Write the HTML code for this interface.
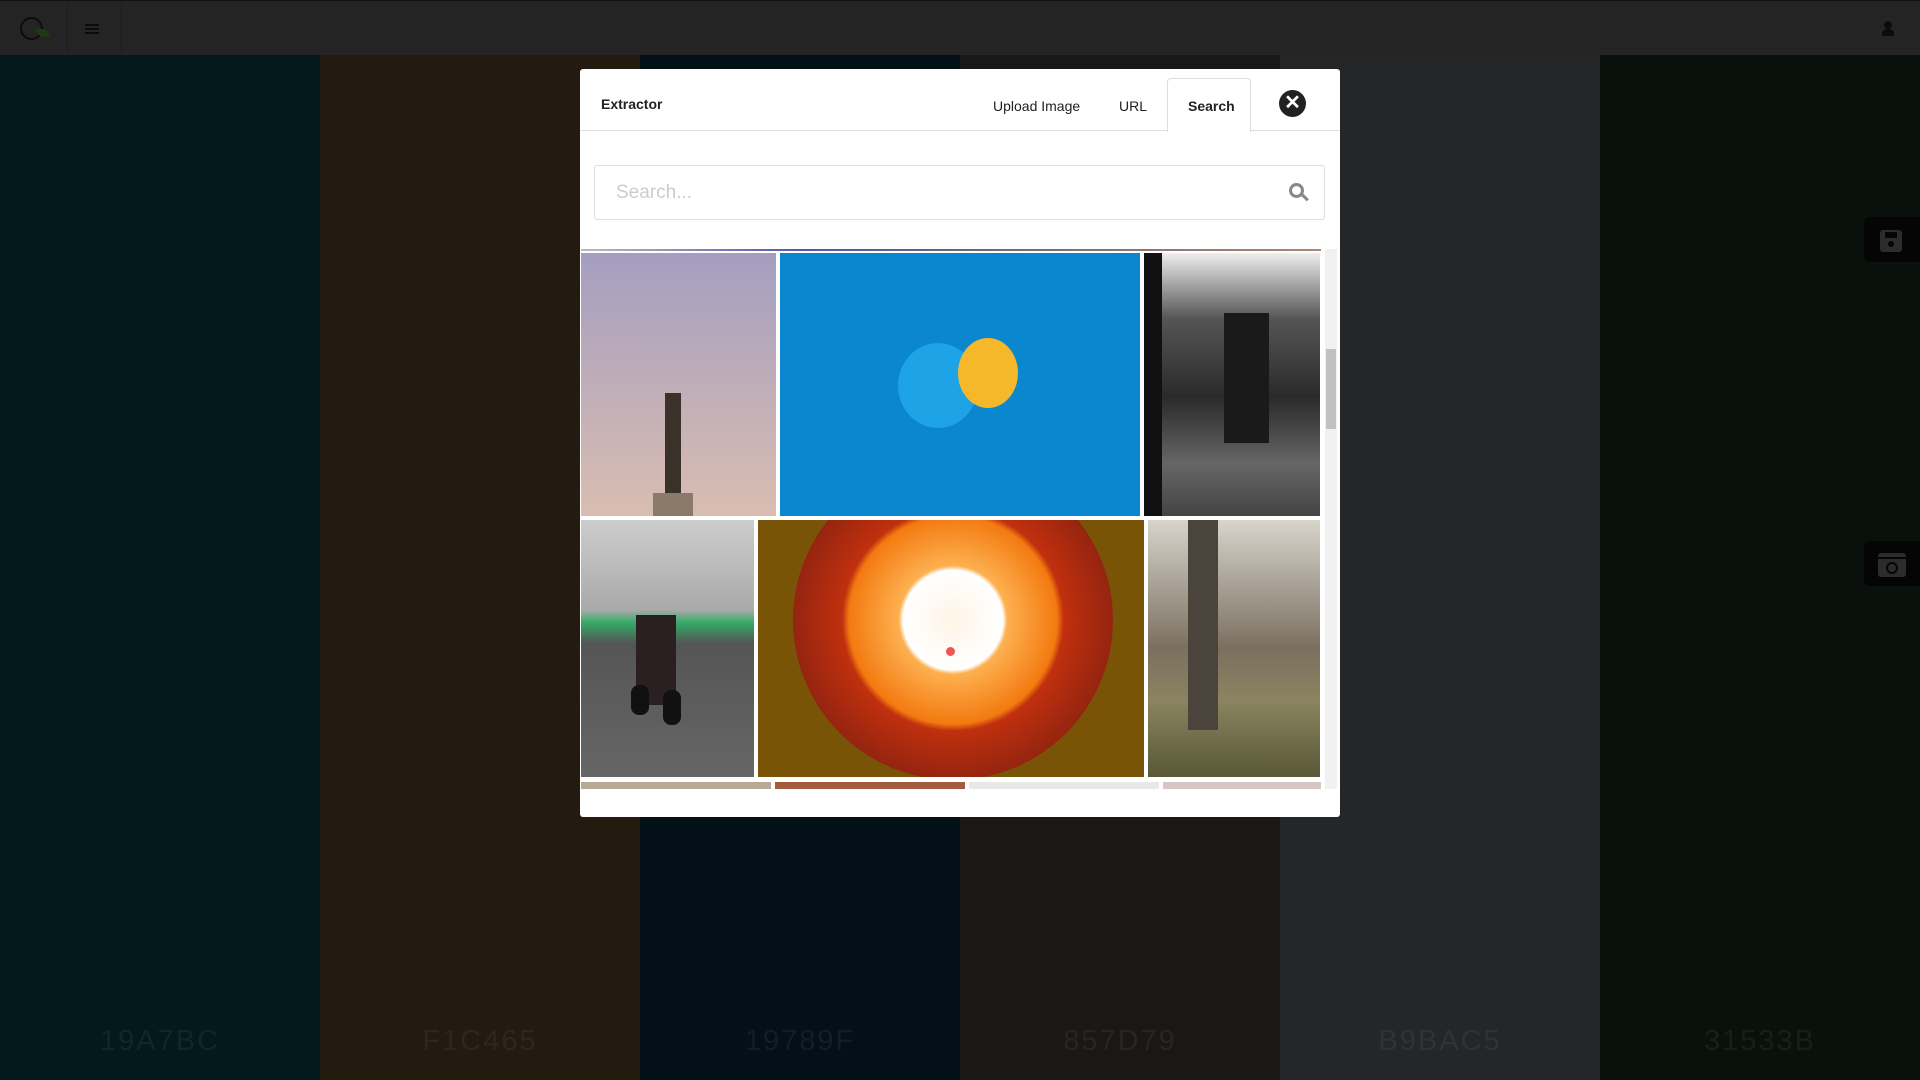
<!DOCTYPE html>
<html><head><meta charset="utf-8"><style>
*{margin:0;padding:0;box-sizing:border-box}
body{width:1920px;height:1080px;overflow:hidden;background:#111;font-family:"Liberation Sans",sans-serif;position:relative}
.col{position:absolute;top:55px;height:1025px;width:320px}
.col span{position:absolute;bottom:22px;width:100%;text-align:center;font-size:29px;letter-spacing:2px;color:rgba(255,255,255,0.06)}
.nav{position:absolute;left:0;top:0;width:1920px;height:55px;background:#242424;border-top:1px solid #111}
.modal{position:absolute;left:580px;top:69px;width:760px;height:748px;background:#fff;border-radius:3px;overflow:hidden}
.hdr{position:absolute;left:0;top:0;width:760px;height:62px;border-bottom:1px solid #ddd}
.t{position:absolute;font-size:14px;color:#222}
.img{position:absolute;overflow:hidden}
.fb{position:absolute;left:1864px;width:56px;height:45px;background:#050505;border-radius:6px 0 0 6px}
</style></head><body>
<div class="col" style="left:0;background:#03191c"><span>19A7BC</span></div>
<div class="col" style="left:320px;background:#231a10"><span>F1C465</span></div>
<div class="col" style="left:640px;background:#031018"><span>19789F</span></div>
<div class="col" style="left:960px;background:#1a1817"><span>857D79</span></div>
<div class="col" style="left:1280px;background:#252627"><span>B9BAC5</span></div>
<div class="col" style="left:1600px;background:#0a110d"><span>31533B</span></div>
<div class="nav">
 <div style="position:absolute;left:67px;top:0;width:1px;height:54px;background:#1c1c1c"></div>
 <div style="position:absolute;left:121px;top:0;width:1px;height:54px;background:#1c1c1c"></div>
 <div style="position:absolute;left:20px;top:16px;width:23px;height:23px;border:2px solid #0c0c0c;border-radius:50%"></div>
 <div style="position:absolute;left:36px;top:28px;width:14px;height:8px;background:#1e3a10;border-radius:0 8px 0 8px"></div>
 <div style="position:absolute;left:85px;top:23px;width:14px;height:2px;background:#0c0c0c;box-shadow:0 4px 0 #0c0c0c,0 8px 0 #0c0c0c"></div>
 <div style="position:absolute;left:1884px;top:20px;width:8px;height:8px;border-radius:50%;background:#0c0c0c"></div>
 <div style="position:absolute;left:1882px;top:28px;width:12px;height:7px;border-radius:5px 5px 0 0;background:#0c0c0c"></div>
</div>
<div class="fb" style="top:217px"><div style="position:absolute;left:16px;top:13px;width:22px;height:22px;background:#2c2c2c;border-radius:3px"></div><div style="position:absolute;left:21px;top:15px;width:12px;height:6px;background:#050505"></div><div style="position:absolute;left:24px;top:24px;width:6px;height:6px;background:#050505;border-radius:50%"></div></div>
<div class="fb" style="top:541px"><div style="position:absolute;left:14px;top:12px;width:28px;height:24px;background:#2c2c2c;border-radius:3px"></div><div style="position:absolute;left:14px;top:16px;width:28px;height:2px;background:#050505"></div><div style="position:absolute;left:22px;top:21px;width:12px;height:12px;border:2px solid #050505;border-radius:50%"></div></div>

<div class="modal">
 <div class="hdr">
  <div class="t" style="left:21px;top:27px;font-weight:bold;font-size:14px">Extractor</div>
  <div class="t" style="left:413px;top:29px">Upload Image</div>
  <div class="t" style="left:539px;top:29px">URL</div>
  <div style="position:absolute;left:587px;top:9px;width:84px;height:54px;background:#fff;border:1px solid #ddd;border-bottom:none;border-radius:4px 4px 0 0"></div>
  <div class="t" style="left:608px;top:29px;font-weight:bold">Search</div>
  <div style="position:absolute;left:699px;top:21px;width:27px;height:27px;border-radius:50%;background:#222;color:#fff;font-size:20px;font-weight:bold;text-align:center;line-height:27px">✕</div>
 </div>
 <div style="position:absolute;left:14px;top:96px;width:731px;height:55px;border:1px solid #ddd;border-radius:3px">
  <div style="position:absolute;left:21px;top:16px;font-size:19px;color:#ccc">Search...</div>
  <div style="position:absolute;left:694px;top:17px;width:15px;height:15px;border:3px solid #888;border-radius:50%"></div>
  <div style="position:absolute;left:706px;top:30px;width:8px;height:3px;background:#888;transform:rotate(45deg)"></div>
 </div>
 <div style="position:absolute;left:0;top:180px;width:760px;height:540px;overflow:hidden">
  <div class="img" style="left:1px;top:0;width:740px;height:2px;background:linear-gradient(90deg,#bbb,#55a 30%,#667 50%,#a87)"></div>
  <div class="img" style="left:1px;top:4px;width:195px;height:263px;background:linear-gradient(#a59ec0,#d9bdb0)"><div style="position:absolute;left:84px;top:140px;width:16px;height:100px;background:#3a3128"></div><div style="position:absolute;left:72px;top:240px;width:40px;height:23px;background:#8a7a6a"></div></div>
  <div class="img" style="left:200px;top:4px;width:360px;height:263px;background:#0a87cf"><div style="position:absolute;left:118px;top:90px;width:80px;height:85px;border-radius:50%;background:#1ea3e6"></div><div style="position:absolute;left:178px;top:85px;width:60px;height:70px;border-radius:50%;background:#f5b82a"></div></div>
  <div class="img" style="left:564px;top:4px;width:176px;height:263px;background:linear-gradient(#eee,#555 25%,#2a2a2a 55%,#666 80%,#444)"><div style="position:absolute;left:0;top:0;width:18px;height:263px;background:#111"></div><div style="position:absolute;left:80px;top:60px;width:45px;height:130px;background:#1a1a1a"></div></div>
  <div class="img" style="left:1px;top:271px;width:173px;height:257px;background:linear-gradient(#ccc,#aaa 35%,#3a6 40%,#555 48%,#666)"><div style="position:absolute;left:55px;top:95px;width:40px;height:90px;background:#2a2022"></div><div style="position:absolute;left:50px;top:165px;width:18px;height:30px;border-radius:8px;background:#111"></div><div style="position:absolute;left:82px;top:170px;width:18px;height:35px;border-radius:8px;background:#111"></div></div>
  <div class="img" style="left:178px;top:271px;width:386px;height:257px;background:#7a5406"><div style="position:absolute;left:35px;top:-60px;width:320px;height:320px;border-radius:50%;background:radial-gradient(circle,#fff4e6 0,#fff 22%,#fdb050 24%,#f37a10 46%,#c0300e 49%,#8c2210 75%,#5e1408 100%)"></div><div style="position:absolute;left:188px;top:127px;width:9px;height:9px;border-radius:50%;background:#e55"></div></div>
  <div class="img" style="left:568px;top:271px;width:172px;height:257px;background:linear-gradient(#d8d4cc,#7a7060 50%,#8a8460 70%,#5a5838)"><div style="position:absolute;left:40px;top:0;width:30px;height:210px;background:#4a443c"></div></div>
  <div class="img" style="left:1px;top:533px;width:190px;height:10px;background:#b8a898"></div>
  <div class="img" style="left:195px;top:533px;width:190px;height:10px;background:#a35a3e"></div>
  <div class="img" style="left:389px;top:533px;width:190px;height:10px;background:#e8e8e8"></div>
  <div class="img" style="left:583px;top:533px;width:158px;height:10px;background:#d8c4c0"></div>
  <div style="position:absolute;left:745px;top:0;width:12px;height:540px;background:#f1f1f1"><div style="position:absolute;left:1px;top:100px;width:10px;height:80px;background:#c1c1c1"></div></div>
 </div>
</div>
</body></html>
